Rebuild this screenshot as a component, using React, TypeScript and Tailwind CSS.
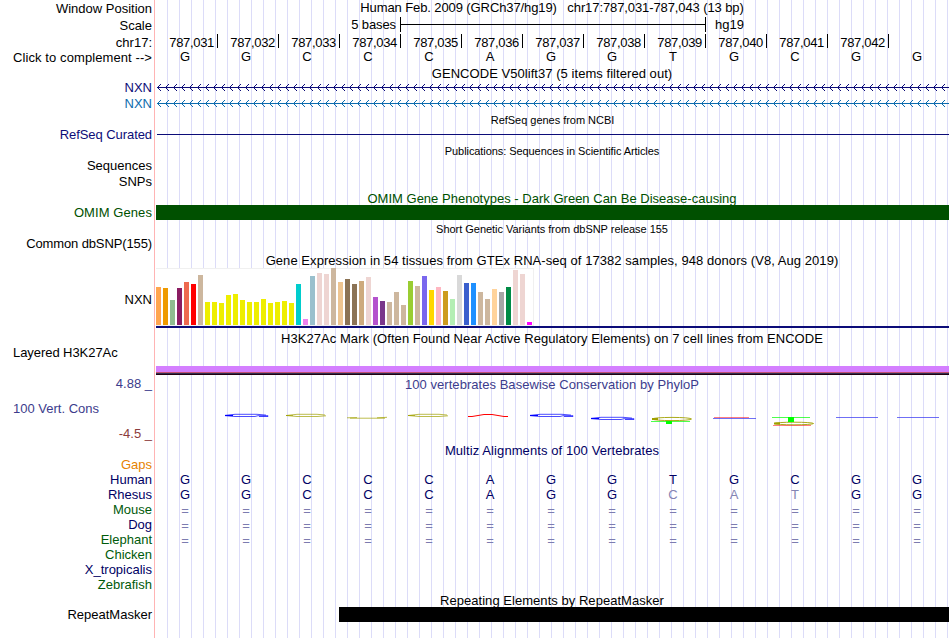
import React from "react";
import clsx from "clsx";

const labels = [
  { text: "Window Position", box: "h-[17px]" },
  { text: "Scale", box: "h-[17px]" },
  { text: "chr17:", box: "h-4" },
  { text: "Click to complement -->", box: "h-[15px] tracking-[0.09px]" },
  { text: "NXN", box: "h-[15px] mt-[15px] text-[#0c0c78]" },
  { text: "NXN", box: "h-4 text-[#0c6cae]" },
  { text: "RefSeq Curated", box: "h-[15px] mt-4 text-[#0c0c78] tracking-[-0.07px]" },
  { text: "Sequences", box: "h-[15px] mt-4" },
  { text: "SNPs", box: "h-4" },
  { text: "OMIM Genes", box: "h-[15px] mt-4 text-[#005000] tracking-[0.08px]" },
  { text: "Common dbSNP(155)", box: "h-[15px] mt-4 tracking-[-0.12px]" },
  { text: "NXN", box: "h-16 mt-4" },
  { text: "Layered H3K27Ac", box: "h-[15px] mt-[14px] justify-start pl-[13px] tracking-[-0.06px]" },
  { text: "4.88 _", box: "h-[15px] mt-4 text-[#3c3c8c]" },
  { text: "100 Vert. Cons", box: "h-[15px] mt-[10px] justify-start pl-[13px] text-[#3c3c8c]" },
  { text: "-4.5 _", box: "h-[15px] mt-[10px] text-[#8c3c3c]" },
  { text: "Gaps", box: "h-[15px] mt-4 text-[#e68200]" },
  { text: "Human", box: "h-[15px] text-[#000064]" },
  { text: "Rhesus", box: "h-[15px] text-[#000064]" },
  { text: "Mouse", box: "h-[15px] text-[#005a0a]" },
  { text: "Dog", box: "h-[15px] text-[#000064]" },
  { text: "Elephant", box: "h-[15px] text-[#005a0a]" },
  { text: "Chicken", box: "h-[15px] text-[#005a0a]" },
  { text: "X_tropicalis", box: "h-[15px] text-[#000064]" },
  { text: "Zebrafish", box: "h-[15px] text-[#005a0a]" },
  { text: "RepeatMasker", box: "h-[15px] mt-[15px]" },
];

const positions = [
  "787,031", "787,032", "787,033", "787,034", "787,035", "787,036",
  "787,037", "787,038", "787,039", "787,040", "787,041", "787,042",
];

// bar height and colour for each GTEx tissue
const tissues: [number, string][] = [
  [38, "#ffa54f"], [37, "#ee9a00"], [25, "#8fbc8f"], [37, "#8b1c62"],
  [43, "#ee6a50"], [41, "#ff0000"], [50, "#cdb79e"], [23, "#eeee00"],
  [23, "#eeee00"], [22, "#eeee00"], [30, "#eeee00"], [31, "#eeee00"],
  [25, "#eeee00"], [23, "#eeee00"], [23, "#eeee00"], [26, "#eeee00"],
  [22, "#eeee00"], [23, "#eeee00"], [24, "#eeee00"], [22, "#eeee00"],
  [41, "#00cdcd"], [6, "#ee82ee"], [49, "#9ac0cd"], [52, "#eed5d2"],
  [51, "#eed5d2"], [57, "#cdb79e"], [43, "#eec591"], [46, "#8b7355"],
  [41, "#8b7355"], [44, "#cdaa7d"], [48, "#eed5d2"], [28, "#b452cd"],
  [24, "#7a378b"], [23, "#cdb79e"], [33, "#cdb79e"], [20, "#cdb79e"],
  [44, "#9acd32"], [39, "#cdb79e"], [49, "#7a67ee"], [35, "#ffd700"],
  [38, "#ffb6c1"], [34, "#cd9b1d"], [26, "#b4eeb4"], [50, "#d9d9d9"],
  [42, "#3a5fcd"], [42, "#1e90ff"], [33, "#cdb79e"], [26, "#cdb79e"],
  [36, "#ffd39b"], [33, "#a6a6a6"], [38, "#008b45"], [55, "#eed5d2"],
  [51, "#eed5d2"], [3, "#ff00ff"],
];

const Title = ({ text, className }: { text: string; className?: string }) => (
  <div className={clsx("flex justify-center items-center whitespace-pre -ml-px", className)}>
    <span>{text}</span>
  </div>
);

const Bases = ({ seq, className, faded }: { seq: string; className?: string; faded?: number[] }) => (
  <div className={clsx("grid grid-cols-[repeat(13,61px)] h-[15px] items-center", className)}>
    {seq.split("").map((base, i) => (
      <span key={i} className={clsx("text-center pr-[3px]", faded?.includes(i) && "text-[#8484b4]")}>
        {base}
      </span>
    ))}
  </div>
);

const Gene = ({ color, className }: { color: string; className: string }) => (
  <svg width="793" height="15" className={className} shapeRendering="crispEdges">
    <g fill={color}>
      <path d="M1 7h792v1H1z" />
      {Array.from({ length: 99 }, (_, i) => (
        <path
          key={i}
          d={`M${i * 8 + 2} 6h1v1h-1zm1-1h1v1h-1zm1-1h1v1h-1zm-2 4h1v1h-1zm1 1h1v1h-1zm1 1h1v1h-1z`}
        />
      ))}
    </g>
  </svg>
);

const Conservation = () => (
  <svg width="793" height="50" viewBox="156 392 793 50" className="block" fill="none">
    {[[225, 414], [530, 414], [591, 417]].map(([x, y]) => (
      <g key={x} stroke="#0000ff">
        <path d={`M${x} ${y + 1.5}l10 -1.2h22l9 .8`} strokeWidth=".7" />
        <path d={`M${x} ${y + 1.5}l10 1h20l3 -.8h10v.8h-9`} strokeWidth=".7" />
        <path d={`M${x} ${y + 1.5}h8`} strokeWidth="1.2" />
      </g>
    ))}
    {[286, 408].map((x) => (
      <g key={x} stroke="#a0a000" strokeWidth=".7">
        <path d={`M${x + 39} 415l-8 -.7h-20l-11 1.2 11 1h20l9 -.7`} />
        <path d={`M${x} 415.5h7`} />
      </g>
    ))}
    <path d="M347 417.8l10 -.2M377 417.8l10 -.5M350 418.2h35" stroke="#a0a000" strokeWidth=".7" />
    <path d="M468 416.5h4l12 -2h8l12 2h4" stroke="#ff0000" />
    <path d="M651 421.5h39M772 417.5h38" stroke="#00ff00" strokeWidth=".7" />
    <g stroke="#a0a000">
      <ellipse cx="672" cy="419" rx="19.5" ry="1.6" strokeWidth=".9" />
      <path d="M652 419h6M774 423.5h6" strokeWidth="2" />
      <ellipse cx="794" cy="423.5" rx="19.5" ry="1.3" strokeWidth=".9" />
    </g>
    <path d="M773 425.5h38" stroke="#ff0000" strokeWidth=".5" />
    <path d="M666 421h6v3h-6zM788 417h6v5h-6z" fill="#00ff00" />
    <path d="M714 417.5h35" stroke="#ff0000" strokeWidth=".5" />
    <path d="M713 418.5h43M836 417.5h42M897 417.5h42" stroke="#3030f0" strokeWidth=".7" />
  </svg>
);

const App = () => {
  return (
    <main className="flex w-[950px] h-[638px] overflow-hidden bg-white text-black text-[13px] leading-[15px] font-['Liberation_Sans',Arial,sans-serif]">
      <section className="w-[155px] border-r border-[#ffb4b4]">
        {labels.map((label, i) => (
          <div key={i} className={clsx("flex items-center justify-end pr-[2px] whitespace-pre", label.box)}>
            {label.text}
          </div>
        ))}
      </section>

      <section className="w-[793px] ml-px bg-[repeating-linear-gradient(90deg,transparent_0_11px,#dcdcf8_11px_12px)]">
        <Title
          className="h-[15px] tracking-[-0.1px]"
          text="Human Feb. 2009 (GRCh37/hg19)   chr17:787,031-787,043 (13 bp)"
        />
        <div className="flex h-[17px] pt-[2px]">
          <span className="w-[244px] pr-1 text-right tracking-[-0.1px]">5 bases</span>
          <div className="w-[306px] h-[15px] border-x border-black flex items-center">
            <div className="w-full h-px bg-black" />
          </div>
          <span className="pl-[9px]">hg19</span>
        </div>
        <div className="grid grid-cols-[repeat(12,61px)] pl-px mt-[2px] h-4">
          {positions.map((pos) => (
            <div key={pos} className="h-[14px] border-r border-black pr-[3px] pt-px text-right tracking-[-0.33px]">
              {pos}
            </div>
          ))}
        </div>
        <Bases seq="GGCCCAGGTGCGG" className="-mt-px" />
        <Title className="h-4 mt-px -mb-px tracking-[0.05px]" text="GENCODE V50lift37 (5 items filtered out)" />
        <Gene color="#0c0c78" className="block" />
        <Gene color="#0c6cae" className="block mt-px" />
        <Title
          className="h-[15px] mt-[2px] -mb-px ml-0 text-[11px] tracking-[-0.03px]"
          text="RefSeq genes from NCBI"
        />
        <div className="h-[15px] flex items-center pl-px">
          <div className="h-px w-full bg-[#0c0c78]" />
        </div>
        <Title
          className="h-4 mt-px text-[11px] tracking-[-0.07px]"
          text="Publications: Sequences in Scientific Articles"
        />
        <Title
          className="h-4 mt-[31px] -mb-px text-[#005000] tracking-[0.01px]"
          text="OMIM Gene Phenotypes - Dark Green Can Be Disease-causing"
        />
        <div className="h-[15px] bg-[#005000] relative" />
        <Title
          className="h-4 mt-px text-[11px] tracking-[-0.03px]"
          text="Short Genetic Variants from dbSNP release 155"
        />
        <Title
          className="h-[15px] mt-4 tracking-[0.06px]"
          text="Gene Expression in 54 tissues from GTEx RNA-seq of 17382 samples, 948 donors (V8, Aug 2019)"
        />
        <div className="flex items-end gap-[2px] w-[378px] h-[58px] bg-white border-y border-r border-[#f0f0f0]">
          {tissues.map(([height, color], i) => (
            <div key={i} className="w-[5px] shrink-0" style={{ height, backgroundColor: color }} />
          ))}
        </div>
        <div className="h-[2px] bg-[#0c0c78]" />
        <Title
          className="h-[15px] mt-[3px] tracking-[0.05px]"
          text="H3K27Ac Mark (Often Found Near Active Regulatory Elements) on 7 cell lines from ENCODE"
        />
        <div className="mt-5 h-[9px] bg-[#d47fff] flex flex-col justify-end">
          <div className="h-px bg-[#c05070]" />
          <div className="h-px bg-[#303050]" />
          <div className="h-px bg-[#200010]" />
        </div>
        <Title
          className="h-[15px] mt-[2px] text-[#3c3c8c] tracking-[0.04px]"
          text="100 vertebrates Basewise Conservation by PhyloP"
        />
        <Conservation />
        <Title className="h-[15px] mt-px text-[#000064] tracking-[0.09px]" text="Multiz Alignments of 100 Vertebrates" />
        <div className="mt-[14px] text-[#000064]">
          <Bases seq="GGCCCAGGTGCGG" />
          <Bases seq="GGCCCAGGCATGG" faded={[8, 9, 10]} />
          <div className="pt-px -mb-px text-[#7c7cb0]">
            <Bases seq="=============" />
            <Bases seq="=============" />
            <Bases seq="=============" />
          </div>
        </div>
        <Title className="h-4 mt-[45px] -mb-px tracking-[0.04px]" text="Repeating Elements by RepeatMasker" />
        <div className="ml-[183px] h-[15px] bg-black relative" />
      </section>
    </main>
  );
};

export default App;
